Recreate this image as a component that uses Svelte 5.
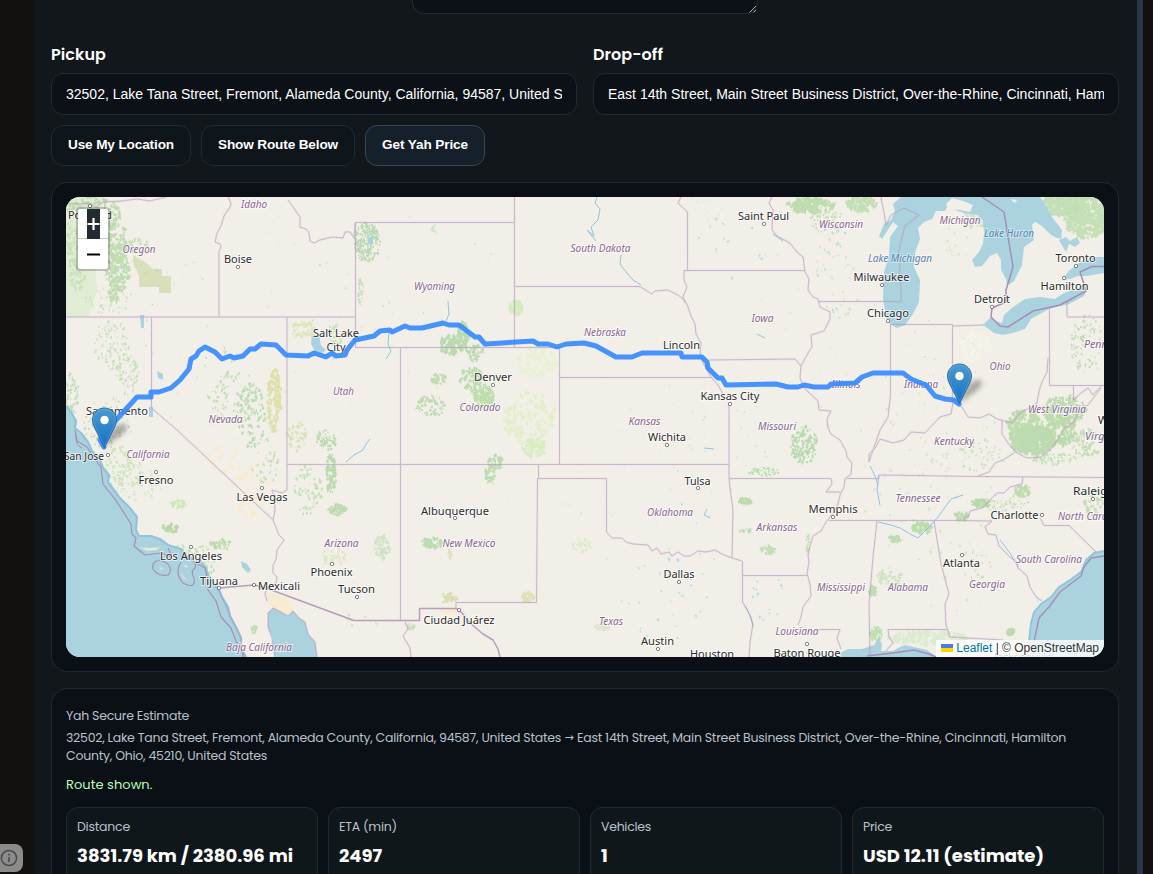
<script>
  const pickup = '32502, Lake Tana Street, Fremont, Alameda County, California, 94587, United States';
  const dropoff = 'East 14th Street, Main Street Business District, Over-the-Rhine, Cincinnati, Hamilton County, Ohio, 45210, United States';

  const stats = [
    { label: 'Distance', value: '3831.79 km / 2380.96 mi', w: 216, lw: 53 },
    { label: 'ETA (min)', value: '2497', w: 43, lw: 58 },
    { label: 'Vehicles', value: '1', w: 7, lw: 50 },
    { label: 'Price', value: 'USD 12.11 (estimate)', w: 181, lw: 29 }
  ];

  // Letter-spacing that brings a line of text to a set width.
  function fit(node, width) {
    const range = document.createRange();
    range.selectNodeContents(node);
    const now = range.getBoundingClientRect().width;
    const n = node.textContent.length;
    node.style.letterSpacing = `${(width - now) / n}px`;
  }

  const states = [
    ['Idaho', 254, 207.5, 26], ['Oregon', 139, 253, 33], ['Wyoming', 434.5, 289.5, 41], ['South Dakota', 600.5, 252, 60],
    ['Nebraska', 605, 336, 42], ['Iowa', 762.5, 322, 22], ['Wisconsin', 841, 228, 44], ['Michigan', 960, 224, 41],
    ['Ohio', 1000, 370, 21], ['Indiana', 921, 388, 34], ['Illinois', 846, 388, 29], ['Utah', 343.5, 395, 21],
    ['Nevada', 225.5, 423, 34], ['Colorado', 480, 410.5, 41], ['Kansas', 644.5, 425, 32], ['Missouri', 777, 430, 38],
    ['Kentucky', 954, 445, 40], ['West Virginia', 1057, 413, 58], ['Virginia', 1104, 440, 38], ['Pennsylvania', 1115, 348, 62],
    ['California', 148, 458, 43], ['Arizona', 341.5, 546.5, 34], ['New Mexico', 469, 547, 53], ['Oklahoma', 670, 516, 46],
    ['Arkansas', 777, 531, 41], ['Tennessee', 918, 501.5, 45], ['Mississippi', 841, 590.5, 48], ['Alabama', 908, 590.5, 40],
    ['Georgia', 987, 588, 36], ['South Carolina', 1049, 562.5, 66], ['North Carolina', 1091, 520, 66],
    ['Texas', 611, 625, 24], ['Louisiana', 797, 634.5, 43], ['Baja California', 259, 651, 66]
  ];

  const cities = [
    ['Portland', 90, 218.5, 44, 90, 206], ['Boise', 238, 263, 28, 238, 267], ['Salt Lake', 336, 337, 46], ['City', 336, 351, 19],
    ['Sacramento', 117, 415, 62], ['San Jose', 84, 460, 40, 108, 455], ['Fresno', 156, 484, 35, 156, 472],
    ['Las Vegas', 262, 500.5, 51, 262, 488], ['Los Angeles', 191, 559.5, 62, 191, 547], ['Tijuana', 219, 584.5, 38, 219, 588],
    ['Mexicali', 279, 589.5, 42, 254, 585], ['Phoenix', 331.5, 575.5, 42, 332, 564], ['Tucson', 356.5, 593, 37, 357, 597],
    ['Albuquerque', 455, 514.5, 68, 455, 518], ['Ciudad Juárez', 459, 623.5, 71, 459, 610], ['Denver', 493, 381, 38, 493, 385],
    ['Lincoln', 681.5, 349, 37], ['Kansas City', 730, 400, 59, 730, 404], ['Wichita', 667, 441, 38, 667, 445],
    ['Tulsa', 697.5, 484.5, 26, 698, 488], ['Dallas', 679, 578, 31, 679, 582], ['Austin', 657.5, 644.5, 33, 658, 649],
    ['Houston', 712, 658, 44], ['Baton Rouge', 807, 656.5, 67, 807, 644], ['Memphis', 833, 513, 49, 833, 517],
    ['Saint Paul', 763.5, 220, 51, 764, 224], ['Milwaukee', 881.5, 281, 56, 882, 285], ['Chicago', 888, 317, 42, 888, 321],
    ['Detroit', 992, 303, 36, 992, 307], ['Toronto', 1075.5, 262, 40, 1076, 266], ['Hamilton', 1064.5, 290, 48, 1064, 278],
    ['Atlanta', 961.5, 567, 37, 962, 555], ['Charlotte', 1014.5, 518.5, 48, 1042, 515], ['Raleigh', 1094, 495, 42, 1093, 499],
    ['Washington', 1129, 424, 62], ['Jacksonville', 1023, 661, 58]
  ];

  const borders = [
    'M66 317H355M219 317V251L221 247 220 244 215 242 217 233 221 226 224 216 230 207 231 203 228 197',
    'M66 203 80 204 88 203 96 207 103 202 122 201 137 199 150 201 166 197',
    'M151.5 317V408L177 430 273 520M287 317V490L282 493 272 490 274 498 275 510 273 520 279 535 284 540 277 550 276 560 273 565 273 573 277 577 276 583 267 588 265 594 267 601',
    'M288 200 293 207 300 217 300 227 306 229 309 233 310 241 314 243 320 240 332 237 343 238 345 232 350 232 354 238 355 223',
    'M355.5 223V347M355 222.500H514M514.5 197V347M355 347.500H560M514 286.5H640L647 291 652 294 655 291 668 290 678 295 684 300 685 303',
    'M400.5 347V620M559.5 347V464M559 377.5H711M287 464.5H729M538.5 464V478M538 478.5H606.5V532',
    'M537.5 478 536.500 602.5H456V608M606.5 532 612 538 622 538 626 542 633 544 648 545 652 551 657 548 661 554 669 552 672 556 678 552 684 556 690 556 698 551 706 552 715 550 724 555 732 558 742 561',
    'M742.5 561V602L748 611 753 624 750 642 749 657M729 404V478L730 488 733 510 732 558M729 478.5H831L832 484 826 492H840M742 575.5H808M819 629.5H840L837 638 841 649',
    'M772 197 769 203 773 210 772 230 777 236 790 243 797 252 803 257 805 272 809 279 808 290 813 297 818 299 820 307 830 312 830 319 824 331 811 335 812 347 808 353 801 366 800 378 804 388 818 401 819 410 831 411 827 419 828 428 831 434 840 440 846 451 847 457 852 463 851 474 845 479 844 487 840 495 838 504 834 512 826 522 821 531 813 536 810 546 808 555 809 563 807 573 810 584 811 596 803 607 801 617 798 625',
    'M681 197 678 203 687.5 212V270M684 270.5H805M684 270 684 280 687 287 683 297 688 307 691 316 695 324 696 334 701 343 700 352 702 361 711 377 718 385 723 394M709 360 795 359 801 366',
    'M819 301.5H901V294L899 250 905 226 919 215 904 208 891 215 886 225 884 213 881 197M890.5 324.5H952.5V403M952.5 326 984 325M890.5 324V395L888 417 880 430 869 462 869 454 876 447 880 439 893 443 904 440 911 432 925 433 940 417 951 414 953 403 962 407 968 417 980 418 989 414 997 419 1012 423 1020 413 1031 407 1037 403 1039 391 1042 382 1047 372 1048 358',
    'M1049.5 308V385.5H1104M1067 302V317H1104M1073.5 386V400L1081 393 1088 388 1093 395 1101 386',
    'M1002 420 1002 434 1010 446 1017 453 1027 458 1041 457 1051 449 1058 439 1064 428 1074 422 1079 410 1088 405 1101 388',
    'M1017 451 1003 460 995 463 989 472 978 476M878.5 475 978 476.5 1104 477.5M878.5 475V478.5H847M829 520.5H963L992 521',
    'M1023 476 1022 484 1010 487 1004 493 997 493 989 501 982 508 970 511 969 515 963 520M1040 518 1044 525.5H1069L1096 552',
    'M992 521 985 527 988 534 996 535 999 546 1010 557 1017 562 1018 568 1027 576 1030 587 1036 597 1042 601M877 521 873 557 869 604 870 655M934 521 941 564 949 594 945 604 946 625 950 637 1003 640M947 629.5H888L889 637 893 643 886 651',
    'M246 657 241 649 241 638 230 616 222 597 219 588M268 627 268 613 273 608 281 612 288 616 293 611 299 618 305 622 308 634 315 642 317 657M268 627 272 638 275 657M405 622 408 629 403 636 410 648 411 657'
  ];

  const land = [
    // [x, y, half width, half height, number of patches, patch size, colour]
    [78, 245, 12, 46, 60, 5, '#c8e1bb'], [115, 255, 11, 50, 70, 6, '#bfdbb0'], [92, 207, 24, 11, 20, 6, '#bfdab0'], [120, 272, 10, 19, 17, 6, '#c0dcb1'],
    [107, 302, 24, 14, 14, 4, '#cfe4c2'], [138, 246, 11, 8, 12, 5, '#ccdfb9'],
    [183, 272, 24, 15, 8, 2, '#bedfe8'], [112, 345, 18, 25, 30, 4, '#c5dfb8'], [128, 375, 12, 20, 22, 4, '#c6dfb9'],
    [108, 425, 25, 27, 25, 4, '#bddbb0'], [72, 395, 7, 22, 25, 4, '#c0ddb5'], [123, 470, 18, 24, 28, 5, '#cde5bd'],
    [140, 482, 22, 20, 16, 4, '#d1e6c0'], [178, 504, 8, 4, 9, 5, '#cae9b6'], [170, 528, 8, 5, 12, 5, '#b9d9aa'],
    [221, 544, 11, 5, 14, 5, '#bcdcae'], [190, 550, 20, 5, 13, 4, '#c4dfb7'], [209, 568, 8, 10, 10, 4, '#c3e0b8'],
    [235, 397, 27, 26, 28, 5, '#c4dfb8'], [252, 415, 14, 34, 28, 5, '#bbdbb0'], [274, 400, 7, 32, 40, 6, '#dee0ae'],
    [297, 437, 11, 15, 14, 5, '#dddfb4'], [221, 356, 20, 18, 10, 3, '#c5e0ba'], [220, 455, 19, 19, 8, 7, '#faebce'],
    [250, 490, 18, 27, 15, 8, '#faebce'], [265, 460, 14, 25, 10, 5, '#c4dfb8'], [308, 490, 14, 25, 19, 5, '#c5deb8'],
    [302, 329, 12, 8, 14, 6, '#e0e3bb'], [335, 340, 8, 18, 13, 5, '#cbdfbb'], [367, 242, 13, 20, 75, 4, '#b9d9b0'],
    [360, 291, 3, 13, 12, 4, '#c9dfbc'], [434, 230, 3, 5, 7, 3, '#cfe4c3'], [278, 232, 20, 30, 10, 4, '#edeed6'],
    [450, 344, 10, 10, 17, 7, '#bcdab0'], [463, 336, 6, 14, 26, 6, '#bcdab0'], [475, 353, 8, 9, 16, 5, '#bcdab0'], [472, 379, 12, 12, 22, 6, '#bddcb0'],
    [484, 396, 10, 12, 30, 6, '#bedead'], [432, 406, 16, 10, 19, 5, '#bddbb1'], [439, 379, 8, 5, 12, 5, '#bfdcb3'],
    [529, 418, 26, 26, 40, 7, '#e2efc9'], [537, 362, 20, 16, 25, 7, '#e8f1d2'], [516, 308, 7, 7, 20, 6, '#d6ecbf'],
    [535, 448, 12, 10, 25, 6, '#d9edc1'], [496, 462, 8, 7, 16, 5, '#bcdcb0'], [490, 474, 5, 9, 14, 5, '#bddbb3'],
    [331, 474, 5, 20, 26, 5, '#bad9ae'], [338, 510, 9, 5, 20, 5, '#bfdbb2'], [326, 440, 10, 11, 14, 5, '#bbdaae'],
    [382, 547, 8, 12, 22, 5, '#d1e2c7'], [334, 557, 12, 9, 13, 5, '#dfe6c5'], [432, 543, 11, 5, 25, 5, '#bbdcae'],
    [449, 598, 8, 5, 12, 5, '#d9deb2'], [528, 597, 6, 5, 18, 5, '#dfe1b9'], [450, 554, 2, 5, 6, 4, '#dde1bf'],
    [582, 545, 10, 7, 14, 4, '#dce9c7'], [603, 627, 8, 3, 14, 5, '#dfe5cc'], [705, 210, 22, 14, 8, 4, '#e2eed8'],
    [811, 205, 24, 8, 55, 6, '#bedcae'], [828, 221, 18, 13, 25, 4, '#c8e0bd'], [862, 204, 15, 8, 34, 6, '#c4dfb5'],
    [833, 262, 26, 28, 18, 3, '#d6e7c9'], [838, 300, 20, 22, 10, 3, '#cee3c4'], [977, 217, 14, 13, 30, 4, '#cbe2bd'],
    [960, 240, 15, 20, 15, 3, '#d3e6c6'], [1086, 216, 22, 22, 120, 7, '#c5e0b7'], [1062, 205, 20, 10, 60, 7, '#c3dfb5'],
    [804, 445, 14, 18, 42, 5, '#b9dab0'], [765, 472, 17, 4, 16, 4, '#bddcb0'], [745, 501, 6, 3, 12, 5, '#bad9ad'],
    [768, 550, 8, 4, 12, 5, '#c4dfb6'], [746, 531, 7, 2, 8, 4, '#bedbb3'], [808, 542, 2, 10, 8, 4, '#c4dfb6'],
    [976, 345, 16, 16, 24, 7, '#f4f3e8'], [1087, 345, 16, 30, 28, 4, '#bfdcb3'], [1025, 425, 18, 15, 45, 7, '#bfdcb1'],
    [1032, 440, 23, 14, 130, 7, '#bddbb0'], [1064, 410, 22, 14, 60, 6, '#bedab2'], [1060, 430, 16, 16, 50, 6, '#bbdbac'],
    [1087, 443, 16, 13, 25, 5, '#c3deb7'], [1054, 459, 23, 6, 22, 4, '#c1dfb4'], [982, 503, 10, 4, 22, 5, '#b9d8aa'],
    [1023, 491, 8, 7, 20, 5, '#bfdcb1'], [962, 516, 8, 5, 15, 5, '#bbdab0'], [922, 528, 10, 6, 26, 5, '#bbdcac'],
    [895, 539, 6, 3, 12, 5, '#bedcb2'], [890, 577, 13, 9, 18, 5, '#d0e4c3'], [873, 591, 4, 5, 14, 5, '#bfdfb2'],
    [876, 634, 6, 8, 20, 5, '#c1dfb4'], [928, 638, 40, 7, 60, 6, '#dbebcf'], [1011, 632, 4, 3, 22, 5, '#b9dbad'],
    [1044, 608, 12, 8, 8, 3, '#c9e2bb'], [1093, 503, 10, 15, 15, 5, '#c2deb5'], [975, 565, 16, 16, 15, 3, '#cce3bd'],
    [979, 455, 22, 18, 17, 4, '#c8e0bd'], [933, 470, 24, 20, 15, 3, '#d2e5c5'], [1005, 505, 25, 10, 15, 4, '#c7e0bb'],
    [254, 629, 3, 4, 9, 4, '#c4dfb8'], [359, 620, 22, 8, 8, 3, '#c4dfb8'], [411, 627, 4, 3, 7, 4, '#c9dfb7'],
    [700, 515, 35, 70, 13, 2, '#b3dce8'], [665, 595, 45, 48, 26, 3, '#b4dce8'], [770, 605, 22, 30, 13, 3, '#b4dce8'],
    [735, 435, 50, 35, 15, 2, '#b8deea'], [390, 275, 130, 70, 20, 2, '#b4dbe8'], [138, 310, 38, 50, 15, 2, '#a9d5e3'],
    [940, 560, 65, 65, 20, 2, '#b9dfe9'], [725, 250, 45, 32, 13, 3, '#b4dce8'], [835, 265, 18, 48, 13, 3, '#b0dbe8'],
    [935, 360, 60, 40, 15, 2, '#b6dce8'], [800, 340, 65, 100, 30, 3, '#e1edd2'], [650, 430, 60, 50, 30, 3, '#e6efd9'],
    [930, 470, 80, 90, 65, 3, '#d3e6c8'], [600, 500, 150, 130, 30, 3, '#e1ebce'], [310, 370, 170, 90, 35, 3, '#dfe9ce']
  ];

  let seed = 417;
  const rnd = () => ((seed = (seed * 16807) % 2147483647) / 2147483647);
  const patches = land.map(([x, y, rx, ry, count, size, fill]) => {
    const fine = size > 3;
    const n = fine ? count * 3 : count;
    const s = fine ? size * 0.62 : size * 0.9;
    let d = '';
    for (let i = 0; i < n; i++) {
      const a = rnd() * 6.283;
      const r = Math.sqrt(rnd());
      const cx = x + Math.cos(a) * r * rx;
      const cy = y + Math.sin(a) * r * ry;
      for (let k = 0; k < 6; k++) {
        const t = (k / 6) * 6.283 + rnd() * 0.6;
        const q = s * (0.1 + rnd() * 0.8);
        d += `${k ? 'L' : 'M'}${(cx + Math.cos(t) * q * 0.8).toFixed(1)} ${(cy + Math.sin(t) * q).toFixed(1)}`;
      }
      d += 'Z';
    }
    return { d, fill };
  });

  const coast = 'M66 406 71 412 76 421 75 428 81 433 88 442 92 451 100 459 103 468 109 475 108 482 119 497 130 508 137 517 136 530 139 536 151 536 160 539 168 545 181 549 186 556 200 561 206 568 208 575 213 582 218 589 222 597 228 607 230 616 237 629 241 638 241 649 246 657';
  const atlantic = 'M1104 551 1094 553 1086 560 1081 572 1070 580 1059 587 1051 597 1041 604 1034 612 1031 623 1029 640 1032 657';
  const route = 'M104 447 100 440 108 428 117 419 137 397H151V392H159L171 388 180 380 189 369 191 359 196 356 199 351 205 347 215 352 222 359 230 356 234 358 243 356 250 349 255 349 261 344 276 345 286 355 308 356 314 353 326 357 332 353 336 356 345 355 347 350 355 340 374 336 380 331 390 330 392 332 405 326 410 328H422L443 323 449 325H459L475 337 479 337 485 344 533 341 538 344H548L557 347 566 344 584 343 596 346 616 357H632L642 353H681L682 357H702L707 362 708 368 718 378 722 378 726 385 776 384 788 387H798L804 385 814 387H828L831 384 855 383 862 377 873 373H903L911 379 926 385 935 396 945 399 954 400 959 404';
</script>

{#snippet pin(x, y)}
  <g transform="translate({x} {y})">
    <path d="M12.500 40C15 30 20 21 28 17C36 14 37 20 31 26Z" fill="#000" opacity=".3" filter="url(#soft)" />
    <path d="M12.5.5C5.8.5.5 5.9.5 12.5c0 4.8 2.7 8.8 4.8 13.3l7.2 14.4 7.2-14.4c2.1-4.5 4.8-8.5 4.8-13.3C24.5 5.9 19.2.5 12.5.5Z" fill="url(#pinfill)" stroke="#2e6d9c" />
    <path d="M12.5 1.6C6.4 1.6 1.6 6.5 1.6 12.5c0 4.4 2.6 8.3 4.7 12.8l6.2 12.5 6.2-12.5c2.1-4.5 4.7-8.4 4.7-12.8 0-6-4.8-10.9-10.9-10.9Z" fill="none" stroke="#fff" stroke-opacity=".13" stroke-width="1.1" />
    <circle cx="12.5" cy="12.5" r="4.6" fill="#fff" stroke="#2d76ad" stroke-width=".6" />
  </g>
{/snippet}

<main class="page">
  <section class="panel">
    <div class="notes">
      <svg width="8" height="8" viewBox="0 0 8 8"><path d="M0.5 7.5 7 1M4.5 7.5 7 5" stroke="#aeb2b6" fill="none" /></svg>
    </div>

    <div class="fields">
      <label class="field">
        <b use:fit={55}>Pickup</b>
        <span class="input"><span>{pickup}</span></span>
      </label>
      <label class="field">
        <b use:fit={70}>Drop-off</b>
        <span class="input"><span>{dropoff}</span></span>
      </label>
    </div>

    <div class="actions">
      <button style="width:140px"><span use:fit={106}>Use My Location</span></button>
      <button style="width:154px"><span use:fit={120}>Show Route Below</span></button>
      <button class="primary" style="width:120px"><span use:fit={86}>Get Yah Price</span></button>
    </div>

    <div class="card mapcard">
      <div class="map">
        <svg class="tiles" width="1038" height="460" viewBox="66 197 1038 460">
          <defs>
            <linearGradient id="pinfill" x1="0" y1="0" x2="0" y2="1">
              <stop offset="0" stop-color="#4a9bd0" /><stop offset="1" stop-color="#126fc6" />
            </linearGradient>
            <filter id="soft" x="-40%" y="-40%" width="180%" height="180%"><feGaussianBlur stdDeviation="2.4" /></filter>
          </defs>
          <rect x="66" y="197" width="1038" height="460" fill="#f2efe9" />
          <path d="M66 197H104L100 215 95 235 103 248 95 262 97 290 88 317H66Z" fill="#e1ecd4" />
          <path d="M133 255 145 262 153 269 162 269V276H171V293H159V287H139V275L134 266Z" fill="#d8dfb9" />

          {#each patches as p}<path d={p.d} fill={p.fill} />{/each}
          <path d="M267 592 290 599 294 608 288 615 274 609 267 602Z" fill="#f7ecd2" />
          <path d="M440 609H458L453 615 443 614Z" fill="#fae9cc" />

          <g fill="#aad3df">
            <path d="{coast}H66Z" />
            <path d="{atlantic}H1104Z" />
            <path d="M268 613 273 608 281 612 288 616 293 611 299 618 305 622 308 634 315 642 317 657H275L272 647 273 638 268 628Z" />
            <path d="M901 197H1037L1043 209 1047 220 1057 231 1062 237 1056 238 1045 228 1037 220 1032 225 1034 240 1024 247 1022 265 1014 281 1007 286 1006 279 1001 270 1001 260 997 253 990 256 982 266 975 267 972 260 979 252 983 244 984 233 983 221 978 215 967 214 955 210 950 202 945 211 936 211 932 219 924 222 918 228 920 239 915 253 914 267 920 280 919 302 913 314 905 325 897 328 890 324 886 317 883 298 884 272 889 256 890 237 898 226 893 222 882 239 879 236 884 224 891 220 895 211 893 204Z" />
            <path d="M983 325 991 317 996 321 1002 323 1004 315 1013 307 1025 299 1040 297 1055 299 1064 293 1080 287 1087 290 1084 296 1069 304 1049 309 1031 319 1025 329 1013 333 1003 335 994 333Z" />
            <path d="M1062 280 1068 272 1076 265 1082 261 1095 257 1104 257V273L1087 276 1078 276 1070 279Z" />
            <path d="M1026 197H1040L1047 207 1052 217 1062 230 1061 239 1051 235 1042 226 1032 220Z" />
            <path d="M1059 240 1066 237 1070 241 1077 237 1080 243 1075 247 1069 244 1066 252Z" />
            <path d="M840 653 848 649 862 649 874 645 879 637 882 645 881 651 893 651 900 647 905 645 914 647 927 650 937 657H840Z" />
            <path d="M312 334 319 336 321 345 326 350 321 354 315 351 311 344Z" />
            <path d="M149 407H153V417H149ZM157 371 163 374 163 380 158 378ZM241 561 247 564 251 570 248 573 242 567ZM367 238 373 236 373 244 369 245ZM140 315H144V328H141Z" />
          </g>
          <g fill="#f2efe9">
            <path d="M946 204 952 198 963 201 973 205 970 212 960 210 948 209Z" />
            <path d="M1010 199 1017 200 1015 203Z" />
          </g>
          <g fill="none" stroke="#91c4dc" stroke-width="1" stroke-linejoin="round">
            <path d={coast} stroke-width="2.2" /><path d={atlantic} stroke-width="1.8" />
            <path d="M597 197 595 203 600 209 598 220 591 227 594 236 587 230 596 241M621 255 620 264 627 273 633 280 641 285M346 462 354 455 363 450 366 444 370 439M448 301 449 314 446 321M389 332 388 344 391 351 386 359M773 234 783 241M745 606 751 617 753 627M879 476 877 490 880 505M878 522 891 525 900 528 912 535 918 538 928 528 938 517 951 499 963 495M1000 540 1010 553 1018 567M707 509 704 515 710 518" />
            <path d="M704 448 714 449M757 334 765 338M870 466 875 476 878 485" />
          </g>

          <g fill="none" stroke="#b79dbd" stroke-linejoin="round">
            <g stroke-width="1" opacity=".62">{#each borders as d}<path {d} />{/each}</g>
            <g stroke-width="2.4" opacity=".12">{#each borders as d}<path {d} />{/each}</g>
            <g stroke="#a58fb2" stroke-width="1.5">
              <path d="M219 588 254 585 266 588 320 608 354 620.5H419.5V608.5H456L462 613 470 623 483 634 493 640 498 649 500 657" stroke="#b69dbb" />
              <path d="M982 197 1004 212 1013 267 1006 290 1006 302 992 308 991 317 1000 326 1008 327 1033 311 1060 305 1086 291 1083 281 1080 272 1092 266.500H1104" />
              <path d="M75 430 77 441 87 447 94 458 101 467 103 484 115 499 126 516 131 524 132 534 136 538 134 546 145 555 161 553 172 557 168 548M196 563 205 568 207 578 208 590 216 601 221 617 231 628 236 641 243 651 243 657" stroke-width="1.2" />
              <path d="M1104 556 1091 558 1084 567 1081 576 1060 592 1049 607 1039 618 1034 642" stroke-width="1.4" />
              <path d="M867 656 893 653 914 650 929 654 936 657" />
              <path d="M161 560Q151 561 153 569Q158 577 168 575Q173 571 168 564ZM181 562Q174 573 183 583Q196 590 194 578Q190 571 195 568 197 563 191 559" stroke-width="1.1" />
              <path d="M76 434Q75 445 82 448" stroke-width="1" />
            </g>
          </g>
          <path d="M139 547 149 548 160 547 157 550 147 551ZM159 567 164 569 161 570ZM183 564 188 566 186 568ZM181 573 187 580 183 578Z" fill="#eceedd" stroke="#c3d9dc" />

          <g class="state">
            {#each states as [name, x, y, w]}<text {x} {y} textLength={w} lengthAdjust="spacingAndGlyphs">{name}</text>{/each}
            <text class="water" x="1009" y="237" textLength="50" lengthAdjust="spacingAndGlyphs">Lake Huron</text>
            <text class="water" x="900" y="262" textLength="64" lengthAdjust="spacingAndGlyphs">Lake Michigan</text>
          </g>
          <g class="city">
            {#each cities as [name, x, y, w, cx, cy]}
              <text {x} {y} textLength={w} lengthAdjust="spacingAndGlyphs">{name}</text>
              {#if cx}<circle {cx} {cy} r="1.7" />{/if}
            {/each}
          </g>

          <path d={route} fill="none" stroke="#3388ff" stroke-opacity=".9" stroke-width="5" stroke-linecap="round" stroke-linejoin="round" />
          {@render pin(92, 407.5)}
          {@render pin(947, 363.5)}
        </svg>

        <div class="zoom">
          <div class="zin"><i><svg width="13" height="30" viewBox="0 0 13 30"><path d="M.5 15H12.500M6.500 9V21" stroke="#fff" stroke-width="2.2" /></svg></i></div>
          <div class="zout"><svg width="13" height="3" viewBox="0 0 13 3"><path d="M0 1.500H13" stroke="#000" stroke-width="2" /></svg></div>
        </div>
        <div class="credit">
          <svg width="12" height="8" viewBox="0 0 12 8"><path fill="#4c7be1" d="M0 0h12v4H0z" /><path fill="#ffd500" d="M0 4h12v4H0z" /></svg>
          <a href="#leaflet">Leaflet</a> | © OpenStreetMap
        </div>
      </div>
    </div>

    <div class="card estimate">
      <p class="muted title"><span use:fit={123}>Yah Secure Estimate</span></p>
      <p class="muted trip">
        <span use:fit={495}>32502, Lake Tana Street, Fremont, Alameda County, California, 94587, United States</span><span class="arrow">→</span><span use:fit={489}>East 14th Street, Main Street Business District, Over-the-Rhine, Cincinnati, Hamilton</span><br />
        <span use:fit={201}>County, Ohio, 45210, United States</span>
      </p>
      <p class="ok"><span use:fit={86.5}>Route shown.</span></p>
      <div class="stats">
        {#each stats as s}
          <div class="stat">
            <div class="muted"><span use:fit={s.lw}>{s.label}</span></div>
            <strong><span use:fit={s.w}>{s.value}</span></strong>
          </div>
        {/each}
      </div>
    </div>
  </section>
  <div class="scroll"></div>
</main>

<div class="info">
  <svg width="18" height="18" viewBox="0 0 18 18" fill="none" stroke="#4a4a4c"><circle cx="9" cy="9" r="7.600" stroke-width="1.500" /><path d="M9 8v5M9 4.800v1.600" stroke-width="1.600" /></svg>
</div>

<style>
  :global(body) { background: #13110f; overflow: hidden; }
  .page { display: flex; height: 874px; overflow: hidden; padding: 0 10px 0 35px; box-sizing: border-box; font-family: Poppins, Inter, sans-serif; color: #fff; }
  .panel { flex: 1; background: #11171a; padding: 0 18px 0 16px; min-width: 0; }
  .scroll { width: 6px; background: #28384a; }
  .notes { box-sizing: border-box; width: 346px; height: 14px; margin: 0 auto 0 361px; border: 1px solid #1f2b35; border-top: 0; border-radius: 0 0 12px 12px; background: #0c1017; display: flex; justify-content: flex-end; align-items: flex-end; }
  .notes svg { display: block; }
  .fields { display: grid; grid-template-columns: 1fr 1fr; gap: 16px; margin-top: 29px; }
  .field { display: block; min-width: 0; }
  .field b { display: inline-block; font-size: 16px; line-height: 24px; font-weight: 600; margin-bottom: 6px; white-space: nowrap; vertical-align: top; }
  .input { display: block; box-sizing: border-box; height: 42px; border: 1px solid #1f2b35; border-radius: 12px; background: #0c1017; padding: 0 14px; font: 14px/40px "Liberation Sans", Arial, sans-serif; }
  .input span { display: block; overflow: hidden; white-space: nowrap; }
  .actions { display: flex; gap: 10px; margin-top: 10px; }
  button { height: 41px; padding: 0 0 2px; border: 1px solid #1f2b35; border-radius: 12px; background: #0e151b; color: #fff; font: bold 13.600px "Liberation Sans", Arial, sans-serif; white-space: nowrap; }
  .primary { background: #16202a; border-color: #334759; }
  .card { box-sizing: border-box; border: 1px solid #1d2932; border-radius: 16px; background: #0b0f16; padding: 14px; }
  .mapcard { margin-top: 16px; height: 490px; }
  .map { position: relative; height: 460px; border-radius: 14px; overflow: hidden; }
  .tiles { display: block; }
  .state { font: italic 10.500px "Noto Sans", sans-serif; text-anchor: middle; fill: #8a6690; stroke: #fff; stroke-width: 2px; stroke-opacity: .65; paint-order: stroke; }
  .water { fill: #5683b3; stroke-opacity: .4; }
  .city { font: 11px "Noto Sans", sans-serif; text-anchor: middle; fill: #2d2d2d; }
  .city text { stroke: #fff; stroke-width: 2px; stroke-opacity: .65; paint-order: stroke; }
  .city circle { fill: #fff; stroke: #666; stroke-width: .8; }
  .zoom { position: absolute; left: 10px; top: 10px; width: 30px; border: 2px solid rgba(0, 0, 0, .2); border-radius: 4px; background: #fff; background-clip: padding-box; }
  .zin { box-sizing: border-box; height: 30px; border-bottom: 1px solid #ccc; display: flex; justify-content: center; }
  .zin i { width: 13px; height: 30px; background: #222b33; }
  .zout { height: 30px; display: flex; align-items: center; justify-content: center; }
  .zin svg, .zout svg { display: block; }
  .credit { position: absolute; right: 0; bottom: 0; height: 17px; padding: 0 5px; background: rgba(255, 255, 255, .8); color: #333; font: 12px/17px "Liberation Sans", Arial, sans-serif; white-space: nowrap; }
  .credit a { color: #0078a8; text-decoration: none; }
  .estimate { margin-top: 16px; height: 220px; padding-top: 18px; }
  p { margin: 0; white-space: nowrap; }
  .muted { color: #b9c2ca; font-size: 12.500px; line-height: 18px; }
  .trip { margin-top: 4px; }
  .arrow { display: inline-block; width: 16px; font: 11px/18px "DejaVu Sans", sans-serif; text-align: center; vertical-align: top; }
  .ok { margin-top: 10px; color: #b5ffb8; font-size: 13px; line-height: 20px; }
  .stats { display: grid; grid-template-columns: repeat(4, 1fr); gap: 10px; margin-top: 12px; }
  .stat { box-sizing: border-box; height: 80px; border: 1px solid #1f2b35; border-radius: 12px; background: #10171b; padding: 10px; white-space: nowrap; }
  strong { display: block; margin-top: 6px; font-size: 18px; line-height: 27px; font-weight: 700; }
  .info { position: absolute; left: 0; top: 844px; width: 23px; height: 28px; border-radius: 0 8px 8px 0; background: #8b8b89; display: flex; align-items: center; }
</style>
